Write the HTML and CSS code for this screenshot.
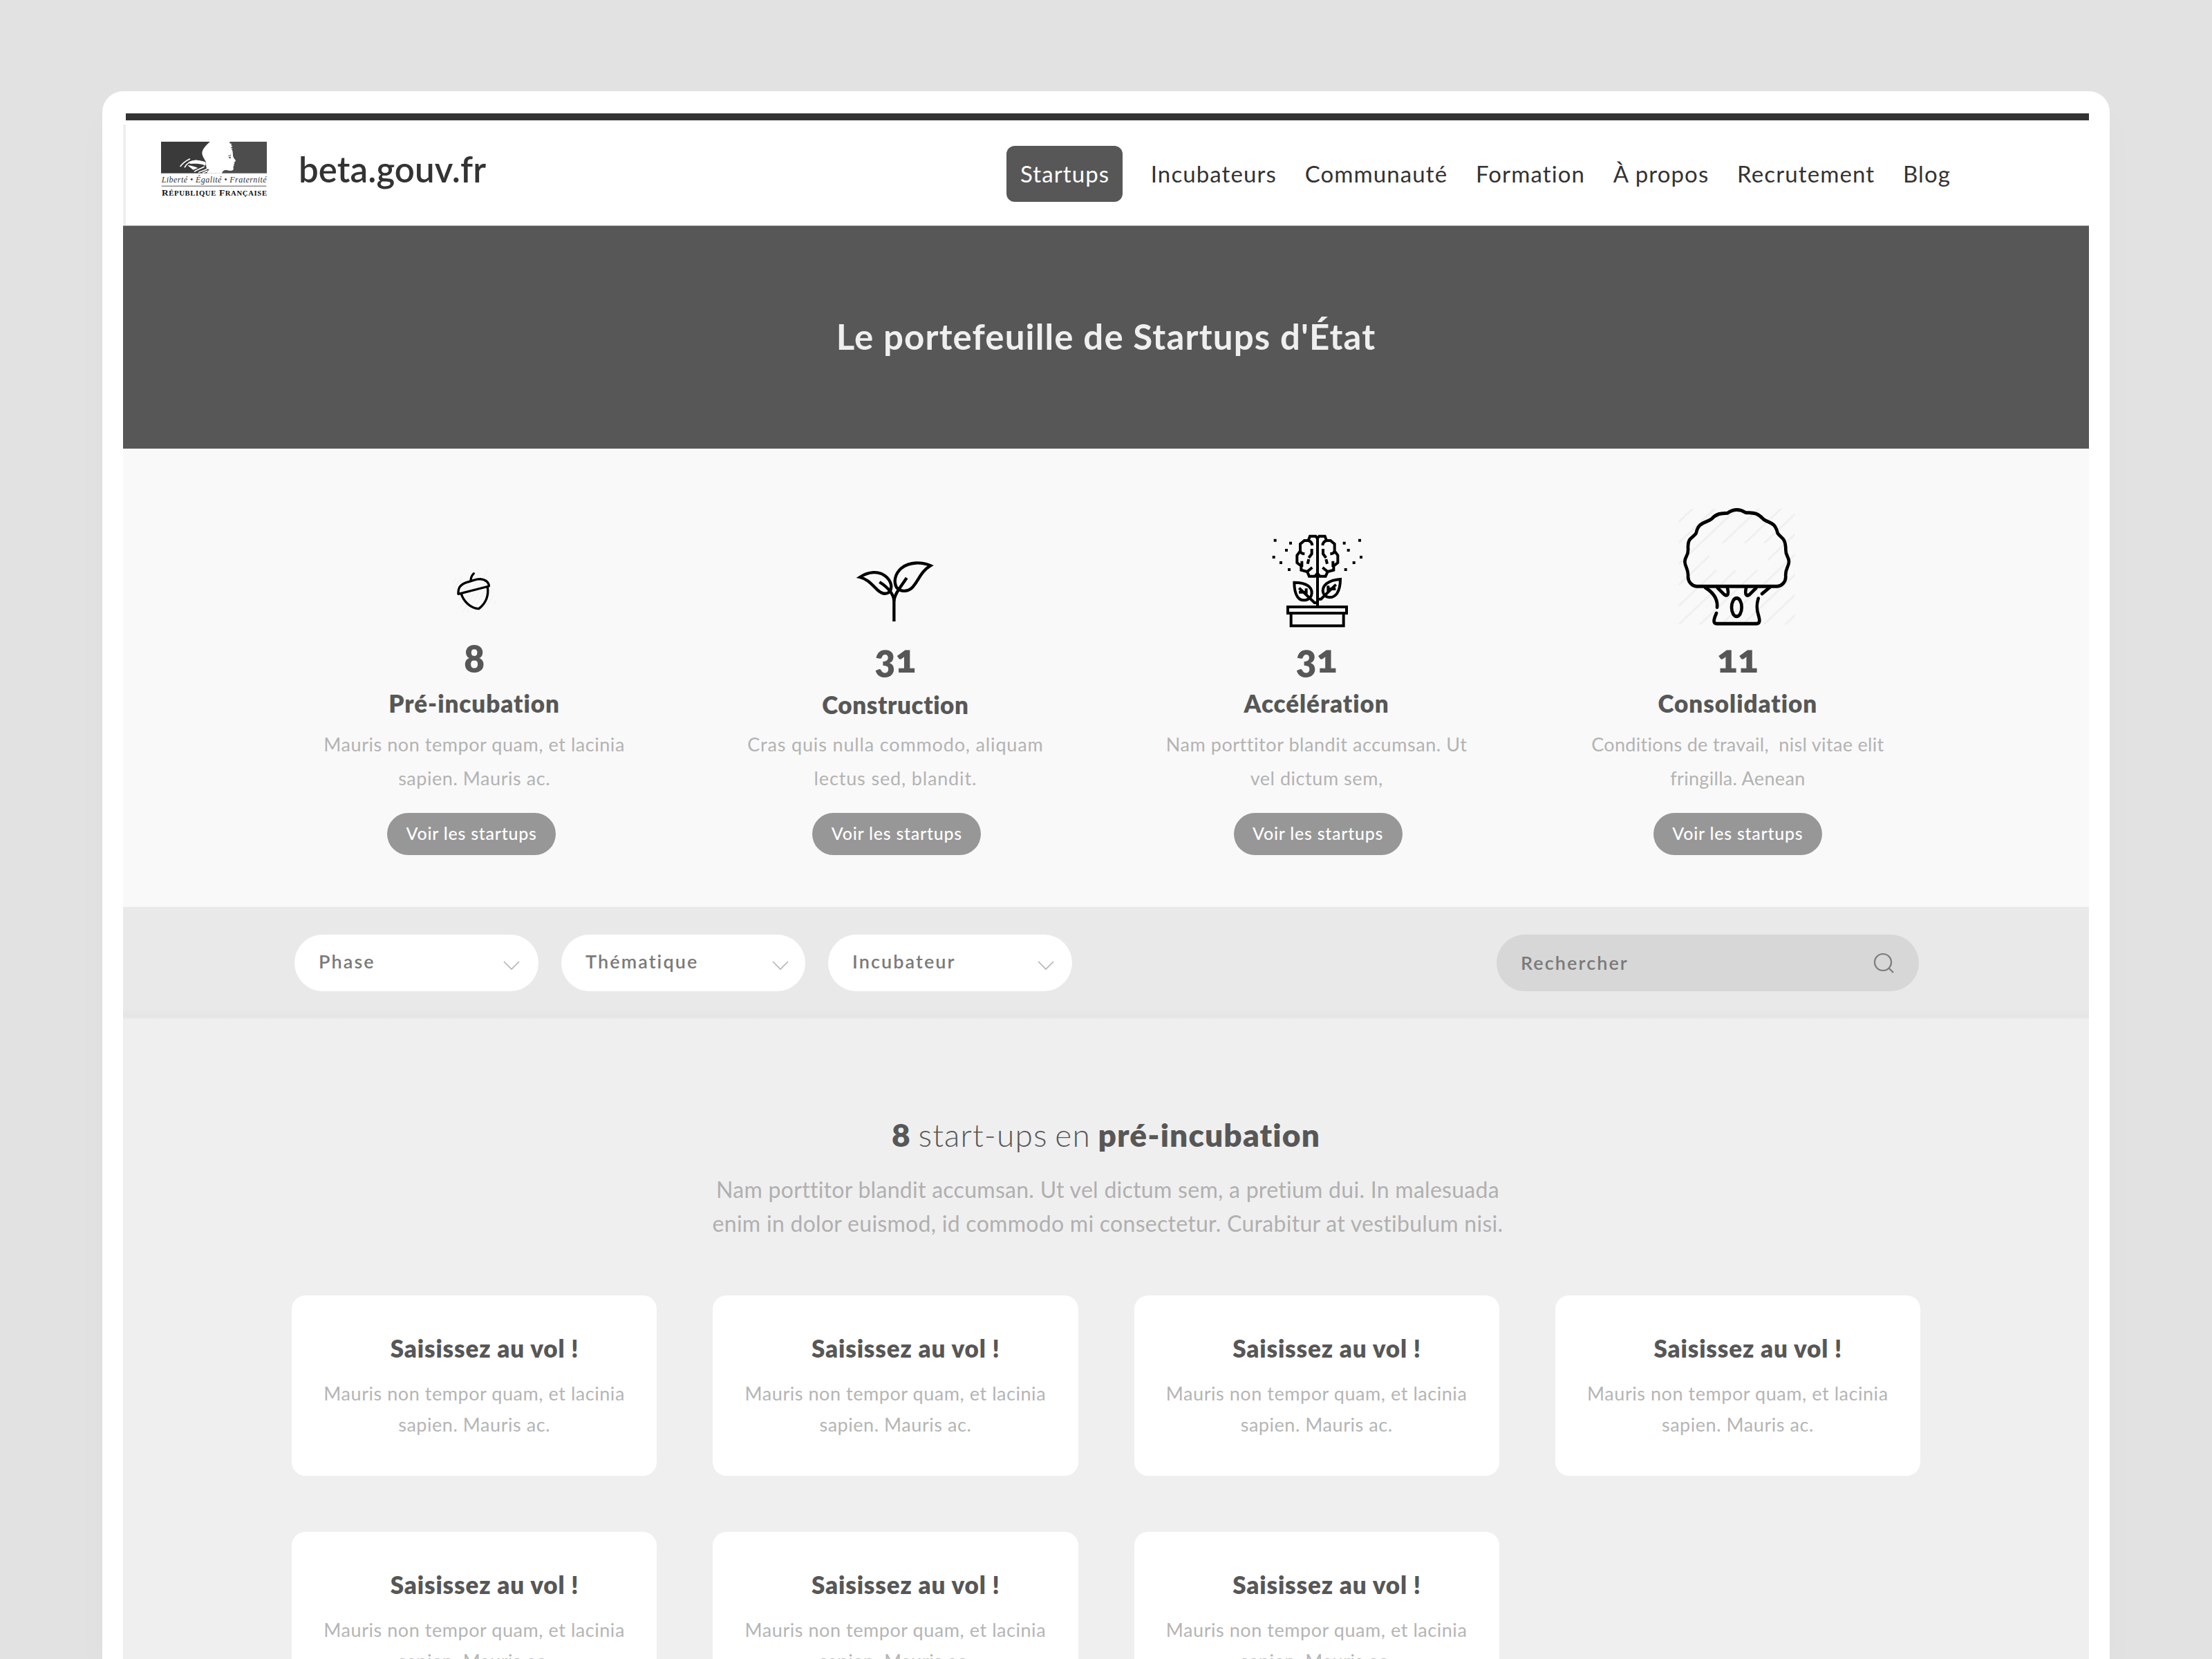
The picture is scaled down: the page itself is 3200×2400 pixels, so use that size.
FILE: index.html
```html
<!DOCTYPE html>
<html lang="fr">
<head>
<meta charset="utf-8">
<title>beta.gouv.fr – Startups</title>
<link rel="stylesheet" href="styles.css">
</head>
<body>
<div class="window">
  <div class="topbar"></div>
  <header class="header">
    <svg class="logo" viewBox="24 27 462 252" aria-label="République Française">
      <rect x="24" y="30" width="240" height="137" fill="#3a3a3a"/>
      <rect x="264" y="30" width="219" height="137" fill="#4d4d4d"/>
      <path fill="#fff" d="M237 29C220 44 202 62 202 80C204 96 212 104 218 116C222 130 214 146 232 150L222 167H288C290 158 298 152 308 153C320 156 330 157 336 153C341 148 336 142 338 137L341 133L339 129L343 125L341 119C348 117 349 113 346 109C340 102 336 96 336 88L335 76C335 70 333 66 329 64L336 60L326 57L334 50L328 46L330 39L320 36L324 29Z"/>
      <path fill="#4d4d4d" d="M313 92L326 86L328 89L316 93ZM316 99L326 94V103L320 101Z"/>
      <path fill="none" stroke="#fff" stroke-width="5" d="M107 138C118 122 132 112 150 104M126 142C134 124 148 116 174 112C190 112 202 118 216 120M168 160C184 150 200 146 212 138M186 163C202 158 216 154 226 146M204 166C212 162 220 160 226 156"/>
      <path fill="#fff" d="M142 120C160 108 190 106 219 122L216 134C196 124 180 124 152 126ZM140 132C156 134 170 138 184 144L164 152C150 142 144 138 140 132Z"/>
      <text class="motto" x="26" y="208" textLength="456">Liberté • Égalité • Fraternité</text>
      <rect x="26" y="221" width="455" height="3" fill="#555"/>
      <text class="republic" x="27" y="264" textLength="456">R<tspan class="small">ÉPUBLIQUE</tspan> F<tspan class="small">RANÇAISE</tspan></text>
    </svg>
    <span class="brand">beta.gouv.fr</span>
    <nav class="nav">
      <a class="nav-item active">Startups</a>
      <a class="nav-item">Incubateurs</a>
      <a class="nav-item">Communauté</a>
      <a class="nav-item">Formation</a>
      <a class="nav-item">À propos</a>
      <a class="nav-item">Recrutement</a>
      <a class="nav-item">Blog</a>
    </nav>
  </header>

  <section class="hero"><h1>Le portefeuille de Startups d'État</h1></section>

  <section class="phases">
    <article class="phase">
      <svg class="phase-icon" viewBox="438 -180 600 570">
        <path class="hatch thin" d="M646 188L658 166M652 212L686 160M668 268L712 196M674 300L754 180M686 320L796 136M708 318L800 160M746 282L802 196M770 286L818 214M794 290L824 240M820 286L832 268"/>
        <g class="line" stroke-width="10">
          <path d="M723 181C723 166 727 158 736 149"/>
          <path d="M669 238C668 214 674 198 706 187C734 180 744 173 764 173C788 175 802 188 802 204Z"/>
          <path d="M682 238C692 270 722 300 758 302C784 282 802 250 796 207"/>
        </g>
      </svg>
      <strong class="count">8</strong>
      <h2>Pré-incubation</h2>
      <p>Mauris non tempor quam, et lacinia<br>sapien. Mauris ac.</p>
      <a class="button">Voir les startups</a>
    </article>
    <article class="phase">
      <svg class="phase-icon" viewBox="405 -180 600 570">
        <g class="line sharp" stroke-width="13">
          <path d="M700 357V268C698 236 678 212 637 186"/>
          <path d="M700 268C702 238 728 208 755 168"/>
          <path d="M552 165C590 140 632 138 660 158C690 180 694 212 680 229C664 242 645 236 628 220C602 195 585 173 552 165Z"/>
          <path d="M858 115C820 98 768 98 733 125C703 150 697 187 712 211C730 230 760 228 777 212C805 185 815 140 858 115Z"/>
        </g>
      </svg>
      <strong class="count">31</strong>
      <h2 class="lowered">Construction</h2>
      <p>Cras quis nulla commodo, aliquam<br>lectus sed, blandit.</p>
      <a class="button">Voir les startups</a>
    </article>
    <article class="phase">
      <svg class="phase-icon" viewBox="432 -60 600 570">
        <defs>
          <g id="lobe">
            <path d="M735 118L727 107H702L695 126H678L660 141V172L646 190V222L664 236V254L690 261L699 281H724L735 268"/>
            <path d="M695 126Q710 130 712 147M660 172Q662 182 679 184M710 162V184L697 201M697 207L692 227M667 215V240M690 261L712 243"/>
            <path class="dots" d="M545 119h12v12h-12zM612 131h12v12h-12zM594 162h12v12h-12zM539 192h12v12h-12zM570 216h12v12h-12zM606 246h12v12h-12z"/>
          </g>
        </defs>
        <g class="line sharp" stroke-width="12">
          <path d="M735 112V412"/>
          <use href="#lobe"/>
          <use href="#lobe" transform="translate(1469 0) scale(-1 1)"/>
          <path d="M634 308C690 308 712 330 710 355C708 387 665 395 648 370C636 352 634 330 634 308Z"/>
          <path d="M655 332L722 396H735M654 350H680M686 334V362"/>
          <path d="M834 294C780 298 758 320 758 345C762 376 800 382 820 355C832 335 834 315 834 294Z"/>
          <path d="M815 317L750 380H735M781 322V350M786 336H814"/>
          <rect x="606" y="414" width="255" height="27"/>
          <rect x="620" y="441" width="228" height="55"/>
        </g>
      </svg>
      <strong class="count">31</strong>
      <h2>Accélération</h2>
      <p>Nam porttitor blandit accumsan. Ut<br>vel dictum sem,</p>
      <a class="button">Voir les startups</a>
    </article>
    <article class="phase">
      <svg class="phase-icon" viewBox="399 60 600 570">
        <clipPath id="hatch-area"><path clip-rule="evenodd" d="M442 100H947V570H442ZM575 240V350H830V240Z"/></clipPath>
        <g transform="scale(1 1.0714)">
          <path class="hatch" clip-path="url(#hatch-area)" d="M442 155L972 -315M442 240L972 -230M442 325L972 -145M442 410L972 -60M442 495L972 25M442 570L972 100M442 652L972 182M442 734L972 264M442 816L972 346M442 898L972 428M442 980L972 510"/>
          <g class="line" stroke-width="14">
            <path d="M520 415C500 414 484 398 483 376C486 345 470 338 469 315C470 292 486 292 483 262C480 215 505 220 518 200C528 152 560 160 585 142C612 116 632 120 655 118C680 102 708 102 732 116C758 119 780 112 810 143C835 160 860 152 872 200C885 220 905 215 907 262C905 292 920 292 921 315C920 338 903 345 907 376C907 398 890 414 870 415Z"/>
            <path d="M558 420C600 445 612 475 609 500M606 524C594 550 590 566 608 566H780C798 566 794 550 788 530C778 500 782 482 788 464M804 445L838 419"/>
            <path d="M612 422L640 448C652 457 662 450 654 422M778 422L750 448C738 457 728 450 735 422"/>
            <ellipse cx="694" cy="500" rx="22" ry="37"/>
          </g>
        </g>
      </svg>
      <strong class="count">11</strong>
      <h2>Consolidation</h2>
      <p>Conditions de travail,&nbsp; nisl vitae elit<br>fringilla. Aenean</p>
      <a class="button">Voir les startups</a>
    </article>
  </section>

  <section class="filters">
    <div class="select">Phase<svg class="chevron" viewBox="0 0 24 14"><path d="M1 1L12 12L23 1"/></svg></div>
    <div class="select">Thématique<svg class="chevron" viewBox="0 0 24 14"><path d="M1 1L12 12L23 1"/></svg></div>
    <div class="select">Incubateur<svg class="chevron" viewBox="0 0 24 14"><path d="M1 1L12 12L23 1"/></svg></div>
    <div class="search">Rechercher<svg class="loupe" viewBox="0 0 32 32"><circle cx="14" cy="14" r="12"/><path d="M22.500 22.500L29 29"/></svg></div>
  </section>

  <main class="results">
    <h2 class="results-title"><b>8</b> start-ups en <b>pré-incubation</b></h2>
    <p class="results-intro">Nam porttitor blandit accumsan. Ut vel dictum sem, a pretium dui. In malesuada<br>enim in dolor euismod, id commodo mi consectetur. Curabitur at vestibulum nisi.</p>
    <div class="cards">
      <article class="card"><h3>Saisissez au vol !</h3><p>Mauris non tempor quam, et lacinia<br>sapien. Mauris ac.</p></article>
      <article class="card"><h3>Saisissez au vol !</h3><p>Mauris non tempor quam, et lacinia<br>sapien. Mauris ac.</p></article>
      <article class="card"><h3>Saisissez au vol !</h3><p>Mauris non tempor quam, et lacinia<br>sapien. Mauris ac.</p></article>
      <article class="card"><h3>Saisissez au vol !</h3><p>Mauris non tempor quam, et lacinia<br>sapien. Mauris ac.</p></article>
      <article class="card"><h3>Saisissez au vol !</h3><p>Mauris non tempor quam, et lacinia<br>sapien. Mauris ac.</p></article>
      <article class="card"><h3>Saisissez au vol !</h3><p>Mauris non tempor quam, et lacinia<br>sapien. Mauris ac.</p></article>
      <article class="card"><h3>Saisissez au vol !</h3><p>Mauris non tempor quam, et lacinia<br>sapien. Mauris ac.</p></article>
    </div>
  </main>
</div>
</body>
</html>
```
FILE: styles.css
```css
* { box-sizing: border-box; }

html, body { height: 100%; }

body {
  margin: 0;
  padding: 132px 148px 0;
  background: #e2e2e2;
  font-family: Lato, "Open Sans", sans-serif;
  overflow: hidden;
}

h1, h2, h3, p { margin: 0; }

.window {
  height: 100%;
  padding: 32px 30px 0;
  background: #fff;
  border-radius: 30px 30px 0 0;
  box-shadow: 0 30px 60px rgba(0, 0, 0, .02);
  overflow: hidden;
}

.topbar {
  height: 11px;
  margin-left: 4px;
  background: #333;
  border-bottom: 1px solid #e6e6e6;
}

/* Header */
.header {
  display: flex;
  align-items: flex-start;
  height: 146px;
  margin-top: 5px;
  padding-left: 51px;
  border-left: 4px solid #efefef;
}

.logo {
  width: 154px;
  height: 84px;
  margin-top: 24px;
}

.motto {
  font: italic 36px "Liberation Serif", serif;
  fill: #333;
}

.republic {
  font: bold 40px "Liberation Serif", serif;
  fill: #111;
}

.republic .small { font-size: 32px; }

.brand {
  margin: 35px 0 0 45px;
  color: #333;
  font-size: 51px;
  font-weight: 600;
  line-height: 60px;
  letter-spacing: .1px;
}

.nav {
  display: flex;
  justify-content: space-between;
  width: 1366px;
  margin: 31px 200px 0 auto;
}

.nav-item {
  color: #333;
  font-size: 33px;
  line-height: 81px;
  letter-spacing: 1.1px;
}

.nav-item.active {
  width: 168px;
  padding-left: 20px;
  background: #575757;
  border-radius: 12px;
  color: #fff;
}

/* Hero */
.hero {
  height: 323px;
  padding-top: 130px;
  background: #575757;
  border-top: 1px solid #aaa;
  text-align: center;
}

.hero h1 {
  color: #efefef;
  font-size: 51px;
  line-height: 60px;
  letter-spacing: 1.15px;
}

/* Phases */
.phases {
  display: grid;
  grid-template-columns: repeat(4, 1fr);
  column-gap: 81px;
  height: 663px;
  padding: 71px 244px 0;
  background: #f9f9f9;
}

.phase {
  display: flex;
  flex-direction: column;
  align-items: center;
  text-align: center;
}

.phase-icon {
  width: 200px;
  height: 190px;
  margin-bottom: 12px;
}

.line {
  fill: none;
  stroke: #000;
  stroke-linecap: round;
  stroke-linejoin: round;
}

.line.sharp {
  stroke-linecap: butt;
  stroke-linejoin: miter;
}

.dots {
  fill: #000;
  stroke: none;
}

.hatch {
  fill: none;
  stroke: #efefef;
  stroke-width: 8;
}

.hatch.thin { stroke-width: 3; }

.count {
  color: #575757;
  font-size: 56px;
  font-weight: 800;
  font-variant-numeric: oldstyle-nums;
  line-height: 60px;
}

.phase h2 {
  margin-top: 15px;
  color: #575757;
  font-size: 35px;
  font-weight: 800;
  line-height: 40px;
  letter-spacing: .95px;
}

.phase h2.lowered {
  margin: 17px 0 -2px;
  letter-spacing: .6px;
}

.phase p {
  margin-top: 15px;
  color: #b3b3b3;
  font-size: 27px;
  line-height: 49px;
  letter-spacing: .55px;
}

.phase:nth-child(2) p { letter-spacing: .85px; }
.phase:nth-child(3) p { letter-spacing: .55px; }
.phase:nth-child(4) p { letter-spacing: .32px; }

.button {
  width: 244px;
  height: 61px;
  margin-top: 26px;
  background: #979797;
  border-radius: 31px;
  color: #fff;
  font-size: 25px;
  font-weight: 500;
  line-height: 59px;
  letter-spacing: .75px;
}

.phase:nth-child(1) .button { margin-right: 8px; }
.phase:nth-child(2) .button { margin-left: 4px; }
.phase:nth-child(3) .button { margin-left: 4px; }

/* Filters */
.filters {
  display: flex;
  gap: 33px;
  height: 162px;
  padding: 40px 246px 0 248px;
  background: linear-gradient(#e9e9e9 146px, #e5e5e5 158px, #ebebeb);
}

.select,
.search {
  display: flex;
  height: 82px;
  padding-left: 35px;
  border-radius: 41px;
  color: #7a7a7a;
  font-size: 27px;
  font-weight: 600;
  line-height: 78px;
  letter-spacing: 2.1px;
}

.select {
  width: 353px;
  background: #fff;
}

.search {
  width: 611px;
  margin-left: auto;
  background: #d7d7d7;
  line-height: 82px;
}

.chevron {
  width: 24px;
  height: 14px;
  margin: 38px 27px 0 auto;
  fill: none;
  stroke: #b3b3b3;
  stroke-width: 1.6;
}

.select:nth-child(2) .chevron { margin-right: 24px; }
.select:nth-child(3) .chevron { margin-right: 26px; }

.loupe {
  width: 32px;
  height: 32px;
  margin: 26px 34px 0 auto;
  fill: none;
  stroke: #7a7a7a;
  stroke-width: 2.2;
}

/* Results */
.results {
  height: 926px;
  padding: 140px 244px 0;
  background: #efefef;
  text-align: center;
}

.results-title {
  color: #575757;
  font-size: 46px;
  font-weight: 300;
  line-height: 56px;
  letter-spacing: 1.15px;
  word-spacing: -3px;
}

.results-title b { font-weight: 800; }

.results-intro {
  margin-top: 26px;
  padding-left: 5px;
  color: #b0b0b0;
  font-size: 32px;
  line-height: 49px;
  letter-spacing: .28px;
}

.cards {
  display: grid;
  grid-template-columns: repeat(4, 1fr);
  gap: 81px;
  margin-top: 80px;
}

.card {
  height: 261px;
  padding-top: 56px;
  background: #fff;
  border-radius: 20px;
}

.card h3 {
  padding-left: 30px;
  color: #575757;
  font-size: 35px;
  font-weight: 800;
  line-height: 40px;
  letter-spacing: .85px;
}

.card p {
  margin-top: 24px;
  color: #b5b5b5;
  font-size: 27px;
  line-height: 44.6px;
  letter-spacing: .55px;
}
```
